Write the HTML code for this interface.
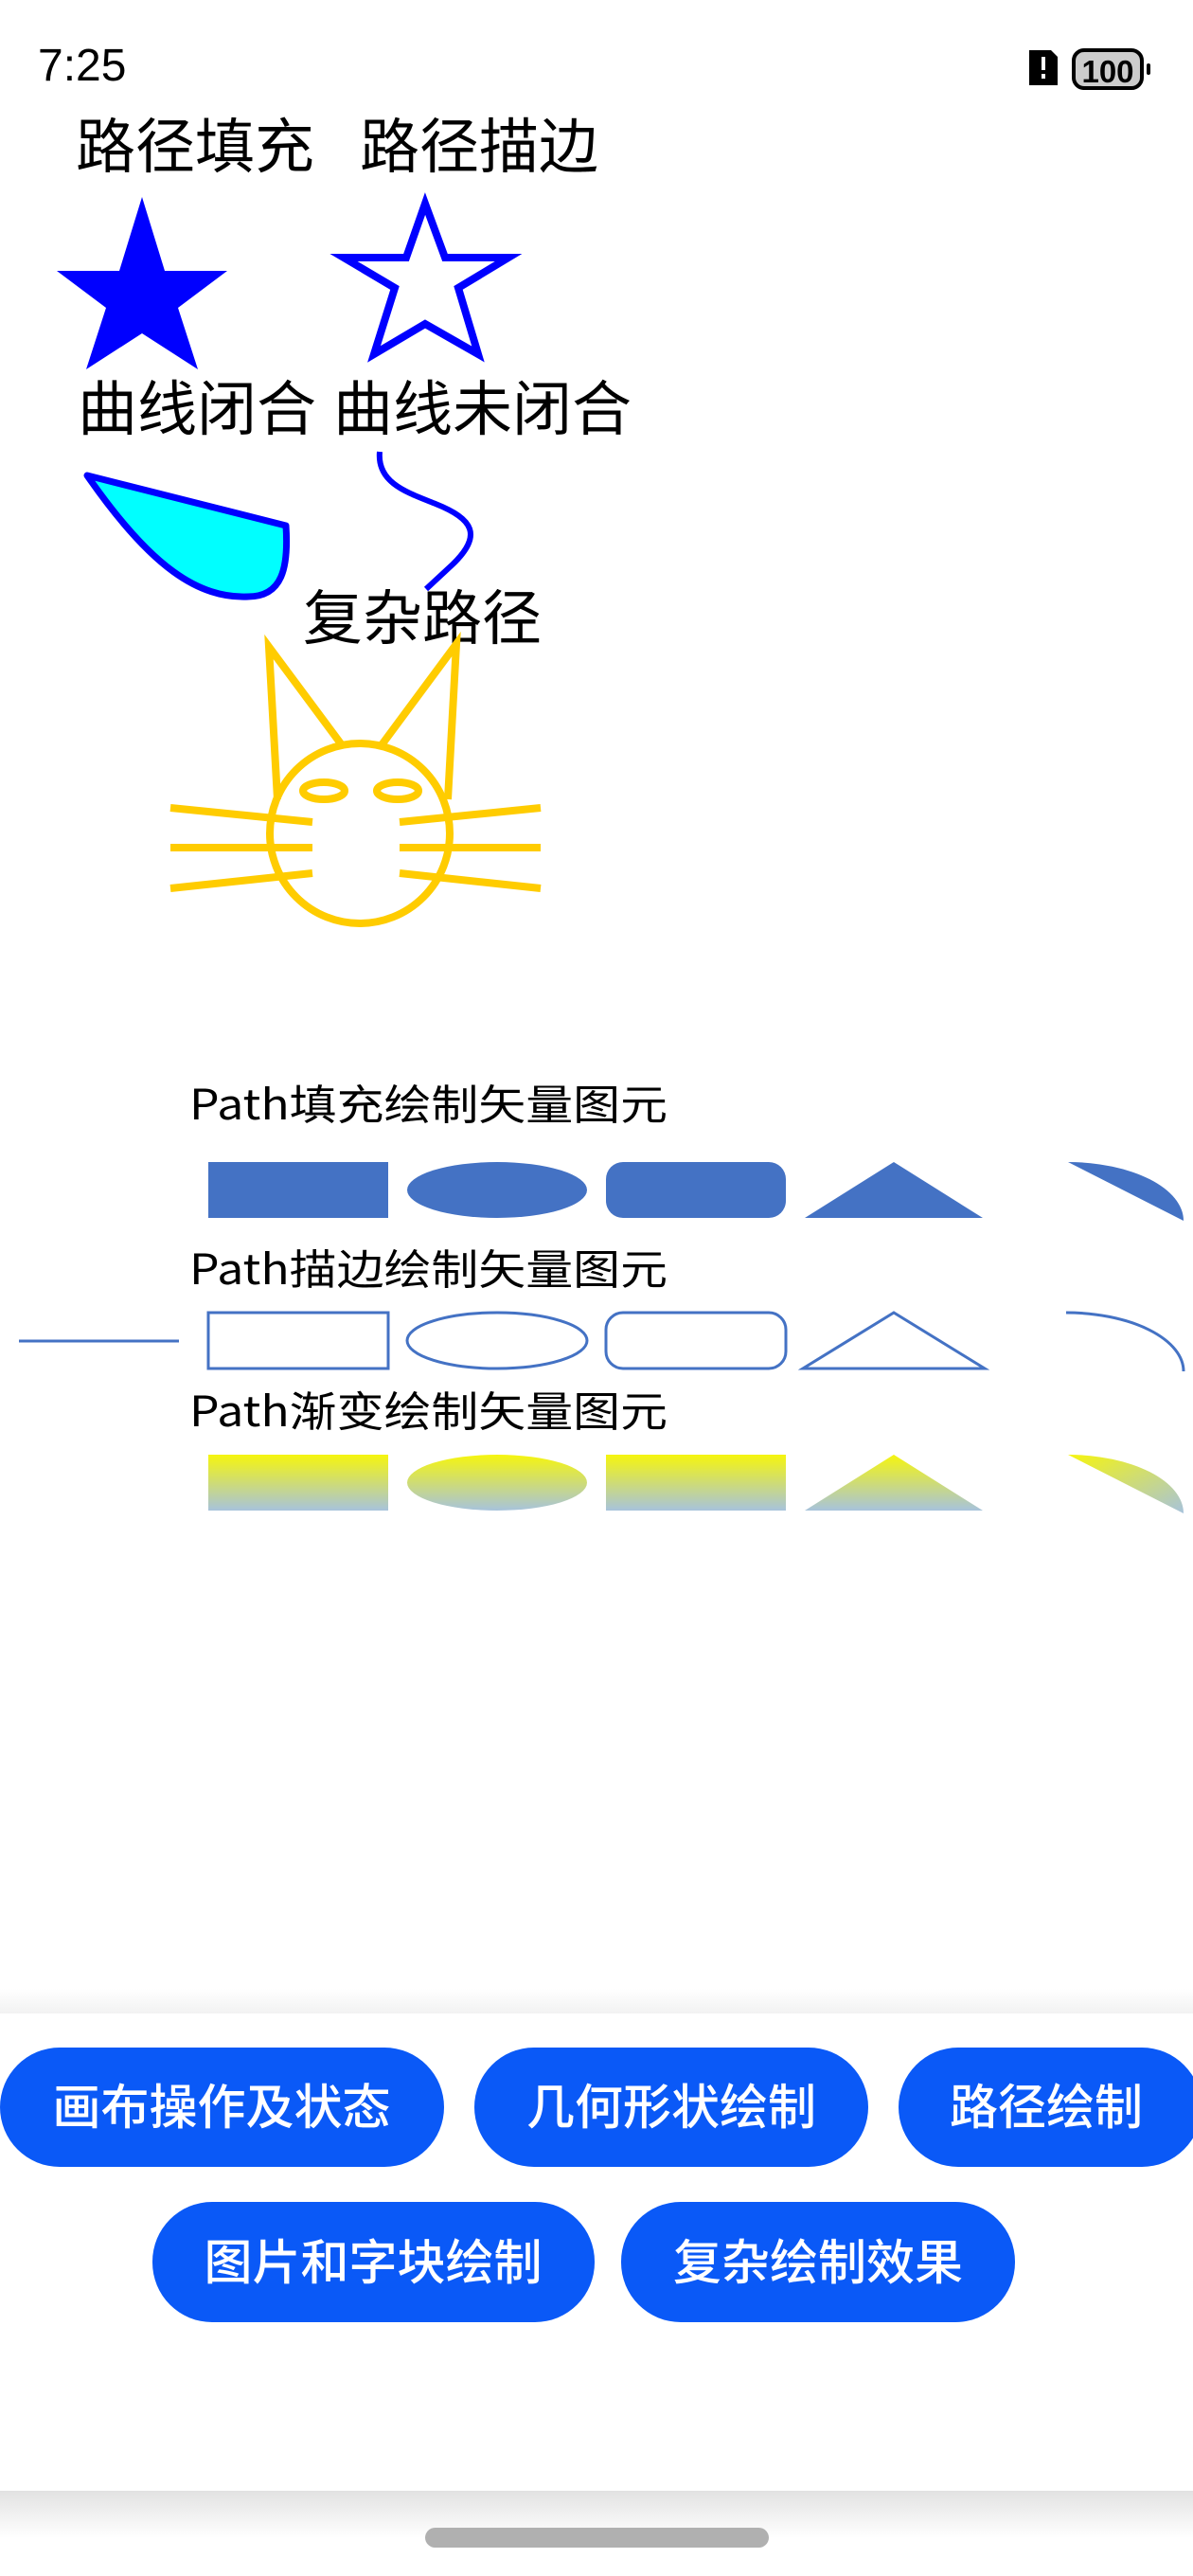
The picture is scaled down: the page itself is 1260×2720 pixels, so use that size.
<!DOCTYPE html>
<html><head><meta charset="utf-8"><style>
html,body{margin:0;padding:0;background:#fff;width:1260px;height:2720px;overflow:hidden}
svg{display:block}
text{font-family:"Liberation Sans","Noto Sans CJK SC",sans-serif}
.cn{font-family:"Noto Sans CJK SC","WenQuanYi Zen Hei",sans-serif}
</style></head><body>
<svg width="1260" height="2720" viewBox="0 0 1260 2720" xmlns="http://www.w3.org/2000/svg">
<defs>
<linearGradient id="g" x1="0" y1="0" x2="0" y2="1"><stop offset="0" stop-color="#f6f50e"/><stop offset="1" stop-color="#a7c3dc"/></linearGradient>
<linearGradient id="g2" x1="0" y1="0" x2="1" y2="1"><stop offset="0" stop-color="#f6f50e"/><stop offset="1" stop-color="#a7c3dc"/></linearGradient>
<linearGradient id="sh1" x1="0" y1="0" x2="0" y2="1"><stop offset="0" stop-color="#fff"/><stop offset="1" stop-color="#f2f2f2"/></linearGradient>
<linearGradient id="sh2" x1="0" y1="0" x2="0" y2="1"><stop offset="0" stop-color="#e2e2e2"/><stop offset="1" stop-color="#fff"/></linearGradient>
</defs>
<text x="40" y="85" font-size="48" fill="#000">7:25</text>
<path d="M1087 53 H1110 L1117 60 V90 H1087 Z" fill="#000"/>
<rect x="1100" y="60" width="4" height="14" fill="#fff"/><rect x="1100" y="78" width="4" height="5" fill="#fff"/>
<rect x="1134" y="53" width="72" height="40" rx="11" fill="#ccc" stroke="#000" stroke-width="4"/>
<rect x="1211" y="67" width="4" height="12" rx="2" fill="#000"/>
<text x="1170" y="87" font-size="33" font-weight="bold" text-anchor="middle" fill="#000">100</text>

<text class="cn" x="80" y="177" font-size="63" fill="#000">路径填充</text>
<text class="cn" x="380" y="177" font-size="63" fill="#000">路径描边</text>
<polygon points="150,208 174,286 240,286 188,325 209,390 150,352 91,390 112,325 60,286 126,286" fill="#0000ff"/>
<polygon points="449,215 470,272 537,272 484,304 505,374 449,342 395,374 417,304 363,272 429,272" fill="none" stroke="#0000ff" stroke-width="8"/>

<text class="cn" x="82" y="454" font-size="63" fill="#000">曲线闭合</text>
<text class="cn" x="352" y="454" font-size="63" fill="#000">曲线未闭合</text>
<path d="M92 502 L302 555 C305 600 298 630 262 630 C210 632 160 600 92 502 Z" fill="#00ffff" stroke="#0000ff" stroke-width="7" stroke-linejoin="round"/>
<path d="M401 477 C398 510 430 520 460 532 C500 548 510 565 478 596 L450 622" fill="none" stroke="#0000ff" stroke-width="6"/>

<text class="cn" x="320" y="675" font-size="63" fill="#000">复杂路径</text>
<g fill="none" stroke="#ffcc00" stroke-width="8">
<path d="M362 788 L284 683 L293 844"/>
<path d="M402 788 L482 680 L473 844"/>
<circle cx="380" cy="880" r="95"/>
<ellipse cx="342" cy="835" rx="22" ry="9"/>
<ellipse cx="420" cy="835" rx="22" ry="9"/>
<path d="M180 853 L330 868 M180 895 L330 895 M180 938 L330 922"/>
<path d="M422 868 L571 853 M422 895 L571 895 M422 922 L571 938"/>
</g>

<text class="cn" x="200" y="1182" font-size="44" fill="#000" textLength="505" lengthAdjust="spacingAndGlyphs">Path填充绘制矢量图元</text>
<g fill="#4472c4">
<rect x="220" y="1227" width="190" height="59"/>
<ellipse cx="525" cy="1256.5" rx="95" ry="29.5"/>
<rect x="640" y="1227" width="190" height="59" rx="18"/>
<polygon points="944,1227 1038,1286 850,1286"/>
<path d="M1128 1227 A122 62 0 0 1 1250 1289 Z"/>
</g>
<text class="cn" x="200" y="1356" font-size="44" fill="#000" textLength="505" lengthAdjust="spacingAndGlyphs">Path描边绘制矢量图元</text>
<g fill="none" stroke="#4472c4" stroke-width="3">
<line x1="20" y1="1416" x2="189" y2="1416"/>
<rect x="220" y="1386" width="190" height="59"/>
<ellipse cx="525" cy="1415.5" rx="95" ry="29.5"/>
<rect x="640" y="1386" width="190" height="59" rx="18"/>
<polygon points="944,1386 1040,1445 848,1445"/>
<path d="M1126 1386 A124 62 0 0 1 1250 1448"/>
</g>
<text class="cn" x="200" y="1506" font-size="44" fill="#000" textLength="505" lengthAdjust="spacingAndGlyphs">Path渐变绘制矢量图元</text>
<g fill="url(#g)">
<rect x="220" y="1536" width="190" height="59"/>
<ellipse cx="525" cy="1565.5" rx="95" ry="29.5"/>
<rect x="640" y="1536" width="190" height="59"/>
<polygon points="944,1536 1038,1595 850,1595"/>
</g>
<path d="M1128 1536 A122 62 0 0 1 1250 1598 Z" fill="url(#g2)"/>

<rect x="0" y="2100" width="1260" height="26" fill="url(#sh1)"/>
<rect x="0" y="2630" width="1260" height="50" fill="url(#sh2)"/>
<g fill="#0a59f7">
<rect x="0" y="2162" width="469" height="126" rx="63"/>
<rect x="501" y="2162" width="416" height="126" rx="63"/>
<rect x="949" y="2162" width="320" height="126" rx="63"/>
<rect x="161" y="2325" width="467" height="127" rx="63"/>
<rect x="656" y="2325" width="416" height="127" rx="63"/>
</g>
<g font-size="51" font-weight="500" fill="#fff" text-anchor="middle">
<text class="cn" x="234" y="2243">画布操作及状态</text>
<text class="cn" x="709" y="2243">几何形状绘制</text>
<text class="cn" x="1105" y="2243">路径绘制</text>
<text class="cn" x="394" y="2407">图片和字块绘制</text>
<text class="cn" x="864" y="2407">复杂绘制效果</text>
</g>
<rect x="449" y="2669" width="363" height="21" rx="10.5" fill="#b0b0b0"/>
</svg>
</body></html>
